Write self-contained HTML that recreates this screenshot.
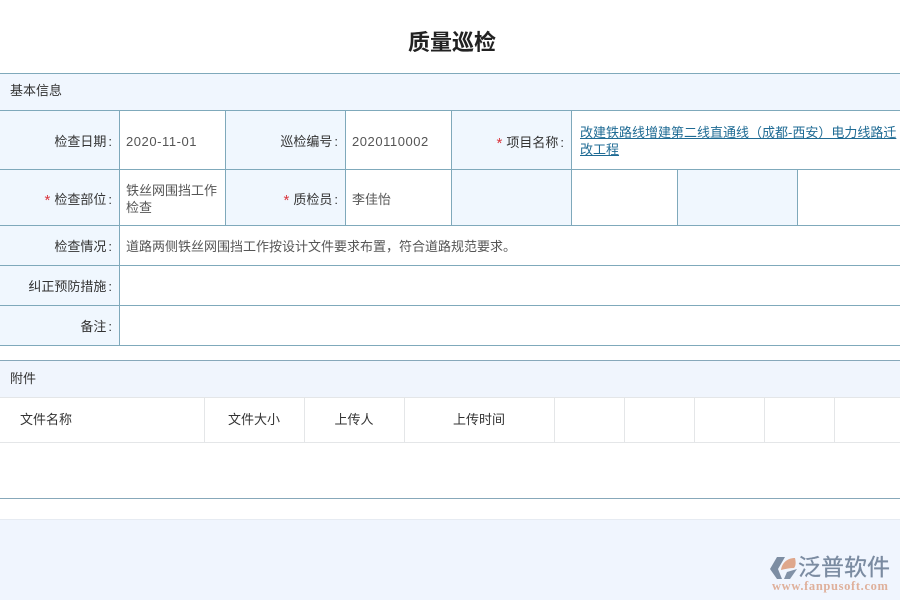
<!DOCTYPE html>
<html lang="zh">
<head>
<meta charset="utf-8">
<title>质量巡检</title>
<style>
html,body{margin:0;padding:0;background:#fff}
body{position:relative;width:900px;height:600px;overflow:hidden;font-family:"Liberation Sans","Noto Sans CJK SC",sans-serif;font-size:13px;color:#333}
.a{position:absolute}
.h{position:absolute;left:0;width:900px;height:1px;background:#7fa9bb}
.v{position:absolute;width:1px;background:#7fa9bb}
.g{background:#e4e6e8}
.bg{position:absolute;background:#f0f7fe}
.t{position:absolute;white-space:nowrap;line-height:18px}
.l{text-align:right;color:#333}
.l i{font-style:normal;padding-left:2px}
.val{color:#555}
.n{letter-spacing:.55px}
.r{color:#d9363e;font-size:15px;margin-right:4px;position:relative;top:1px}
.c{text-align:center}
</style>
</head>
<body>
<div class="t" style="left:0;top:30px;width:904px;text-align:center;font-size:22px;font-weight:bold;line-height:26px;color:#222">质量巡检</div>

<div class="bg" style="left:0;top:74px;width:900px;height:36px;background:#f0f6fe"></div>
<div class="bg" style="left:0;top:111px;width:119px;height:234px"></div>
<div class="bg" style="left:226px;top:111px;width:119px;height:114px"></div>
<div class="bg" style="left:452px;top:111px;width:119px;height:114px"></div>
<div class="bg" style="left:678px;top:170px;width:119px;height:55px"></div>
<div class="bg" style="left:0;top:361px;width:900px;height:36px;background:#f0f5fd"></div>
<div class="bg" style="left:0;top:520px;width:900px;height:80px;background:#f0f5fe"></div>

<div class="h" style="top:73px"></div>
<div class="h" style="top:110px"></div>
<div class="h" style="top:169px"></div>
<div class="h" style="top:225px"></div>
<div class="h" style="top:265px"></div>
<div class="h" style="top:305px"></div>
<div class="h" style="top:345px"></div>
<div class="h" style="top:360px;background:#87a8ba"></div>
<div class="h g" style="top:397px"></div>
<div class="h g" style="top:442px"></div>
<div class="h" style="top:498px;background:#87a8ba"></div>
<div class="h" style="top:519px;background:#e6ebf2"></div>

<div class="v" style="left:119px;top:110px;height:235px"></div>
<div class="v" style="left:225px;top:110px;height:115px"></div>
<div class="v" style="left:345px;top:110px;height:115px"></div>
<div class="v" style="left:451px;top:110px;height:115px"></div>
<div class="v" style="left:571px;top:110px;height:115px"></div>
<div class="v" style="left:677px;top:169px;height:56px"></div>
<div class="v" style="left:797px;top:169px;height:56px"></div>

<div class="v g" style="left:204px;top:397px;height:45px"></div>
<div class="v g" style="left:304px;top:397px;height:45px"></div>
<div class="v g" style="left:404px;top:397px;height:45px"></div>
<div class="v g" style="left:554px;top:397px;height:45px"></div>
<div class="v g" style="left:624px;top:397px;height:45px"></div>
<div class="v g" style="left:694px;top:397px;height:45px"></div>
<div class="v g" style="left:764px;top:397px;height:45px"></div>
<div class="v g" style="left:834px;top:397px;height:45px"></div>

<div class="t" style="left:10px;top:82px">基本信息</div>

<div class="t l" style="left:0;width:112px;top:133px">检查日期<i>:</i></div>
<div class="t val n" style="left:126px;top:133px">2020-11-01</div>
<div class="t l" style="left:226px;width:112px;top:133px">巡检编号<i>:</i></div>
<div class="t val n" style="left:352px;top:133px">2020110002</div>
<div class="t l" style="left:452px;width:112px;top:134px"><span class="r">*</span>项目名称<i>:</i></div>
<div class="a" style="left:580px;top:124px;width:318px;line-height:17px;color:#1f6b94;text-decoration:underline">改建铁路线增建第二线直通线（成都-西安）电力线路迁改工程</div>

<div class="t l" style="left:0;width:112px;top:191px"><span class="r">*</span>检查部位<i>:</i></div>
<div class="a val" style="left:126px;top:182px;width:94px;line-height:17px">铁丝网围挡工作检查</div>
<div class="t l" style="left:226px;width:112px;top:191px"><span class="r">*</span>质检员<i>:</i></div>
<div class="t val" style="left:352px;top:191px">李佳怡</div>

<div class="t l" style="left:0;width:112px;top:238px">检查情况<i>:</i></div>
<div class="t val" style="left:126px;top:238px">道路两侧铁丝网围挡工作按设计文件要求布置，符合道路规范要求。</div>
<div class="t l" style="left:0;width:112px;top:278px">纠正预防措施<i>:</i></div>
<div class="t l" style="left:0;width:112px;top:318px">备注<i>:</i></div>

<div class="t" style="left:10px;top:370px">附件</div>
<div class="t" style="left:20px;top:411px">文件名称</div>
<div class="t c" style="left:204px;width:100px;top:411px">文件大小</div>
<div class="t c" style="left:304px;width:100px;top:411px">上传人</div>
<div class="t c" style="left:404px;width:150px;top:411px">上传时间</div>

<svg class="a" style="left:770px;top:557px" width="28" height="23" viewBox="0 0 28 23">
<path d="M0 12L7 0H15L8 12L12 22H7Z" fill="#7d8da3"/>
<path d="M11 13C12 6 17 1 25 1C26 5 26 9 24 11C20 11 15 12 11 13Z" fill="#dfa78c"/>
<path d="M14 22L17 15L27 12L20 22Z" fill="#8292a7"/>
</svg>
<div class="t" style="left:798px;top:553px;font-size:23px;line-height:28px;color:#7b8ba1;-webkit-text-stroke:.3px #7b8ba1">泛普软件</div>
<div class="t" style="left:772px;top:579px;font-family:'Liberation Serif',serif;font-size:12.5px;font-weight:bold;line-height:14px;letter-spacing:.65px;color:#dfb09b">www.fanpusoft.com</div>
</body>
</html>
